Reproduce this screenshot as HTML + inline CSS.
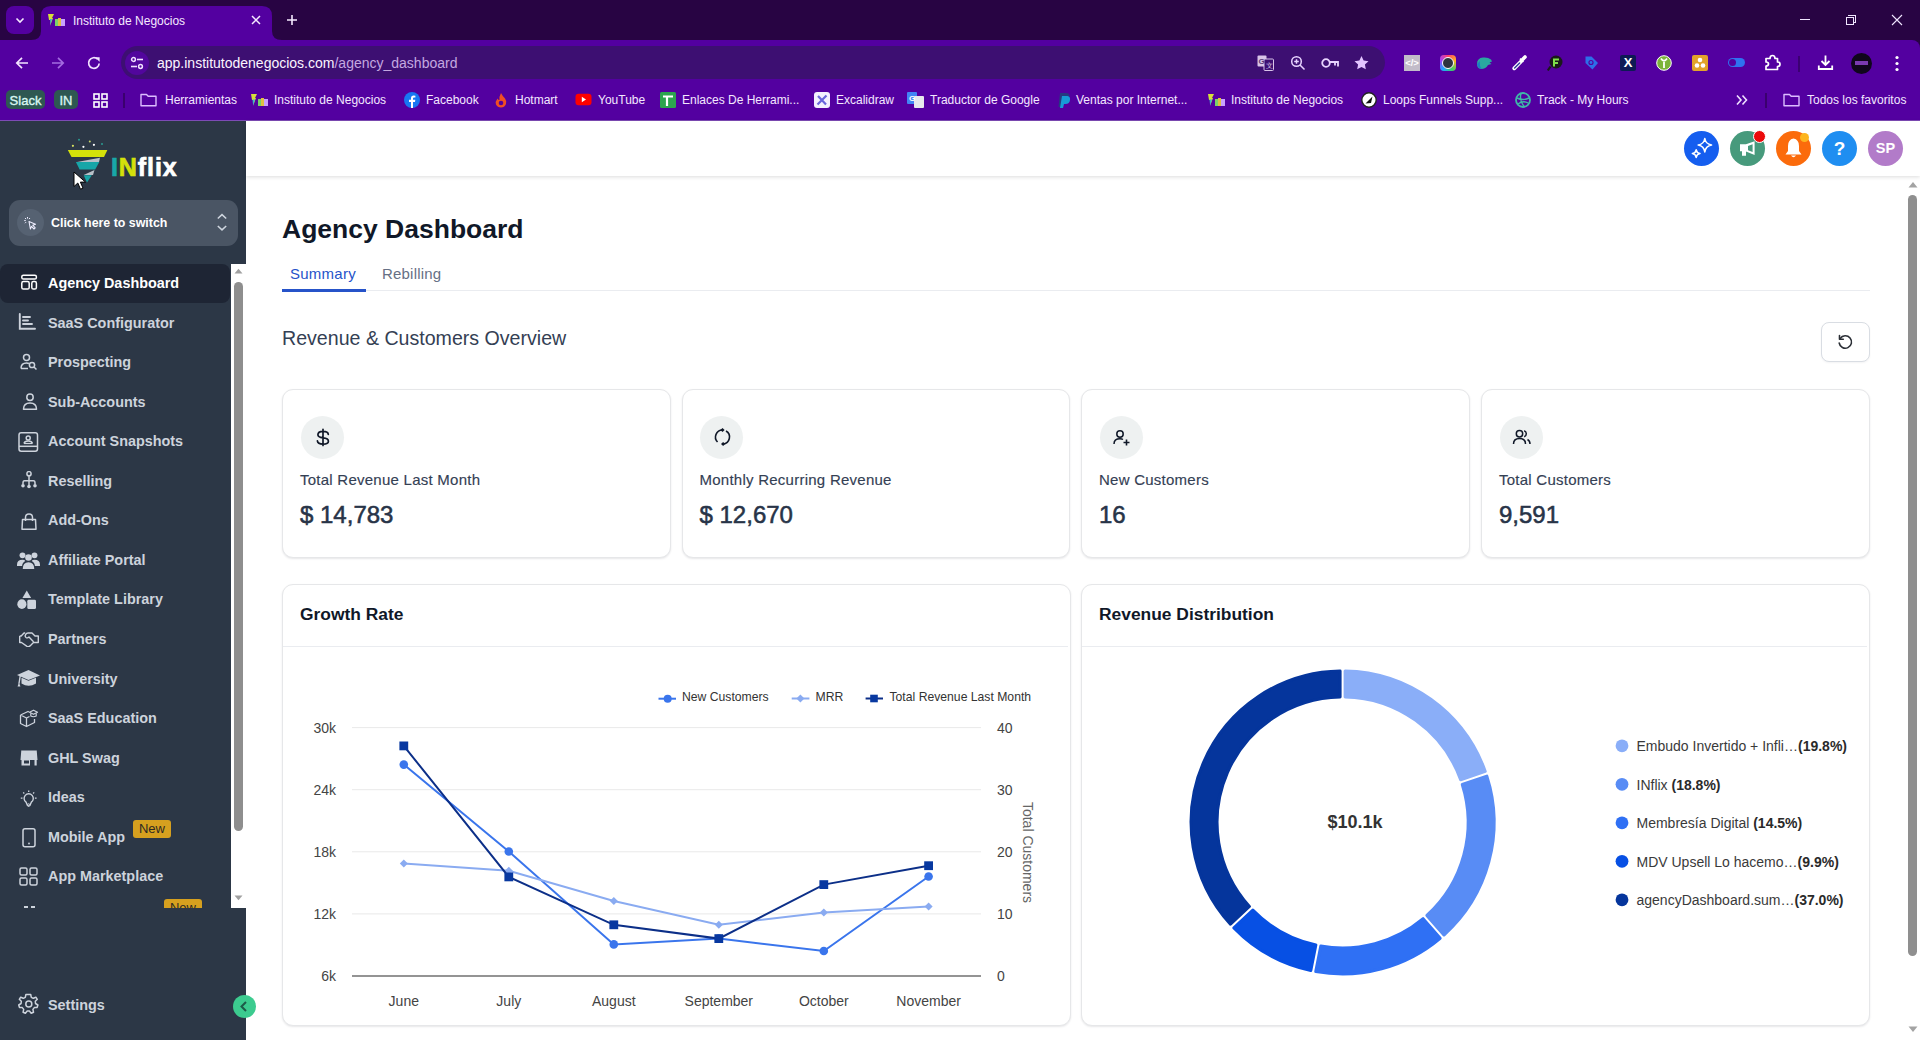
<!DOCTYPE html>
<html><head><meta charset="utf-8">
<style>
*{box-sizing:border-box;margin:0;padding:0}
html,body{width:1920px;height:1040px;overflow:hidden;background:#fff;font-family:"Liberation Sans",sans-serif}
.a{position:absolute}
#tabstrip{left:0;top:0;width:1920px;height:50px;background:#280443}
#toolbar{left:0;top:40px;width:1920px;height:80px;background:#5300a0;border-top-right-radius:8px}
#pageline{left:0;top:120px;width:1920px;height:1px;background:#7d4bb5}
.bm{position:absolute;top:92px;height:16px;font-size:12px;line-height:16px;color:#f3e8ff;white-space:nowrap}
#sidebar{left:0;top:121px;width:246px;height:919px;background:#2c3746}
.nav{position:absolute;left:48px;font-size:14.4px;font-weight:bold;color:#cdd3dc;white-space:nowrap;line-height:18px}
.ni{position:absolute;left:20px}
.card{position:absolute;background:#fff;border:1px solid #e6e7e9;border-radius:11px;box-shadow:0 1px 2px rgba(16,24,40,.10)}
.txt{position:absolute;white-space:nowrap}
</style></head>
<body>
<!-- ===== Browser chrome ===== -->
<div id="tabstrip" class="a"></div>
<div id="toolbar" class="a"></div>
<div id="pageline" class="a"></div>
<!-- tab dropdown -->
<div class="a" style="left:6px;top:6px;width:28px;height:28px;border-radius:8px;background:#5300a0"></div>
<svg class="a" style="left:14px;top:14px" width="12" height="12" viewBox="0 0 12 12"><path d="M2.5 4.5 L6 8 L9.5 4.5" stroke="#f5eaff" stroke-width="1.6" fill="none"/></svg>
<!-- active tab -->
<svg class="a" style="left:31px;top:6px" width="251" height="34" viewBox="0 0 251 34"><path d="M0 34 Q10 34 10 25 L10 10 Q10 0 20 0 L231 0 Q241 0 241 10 L241 25 Q241 34 251 34 Z" fill="#5300a0"/></svg>
<!-- favicon -->
<svg class="a" style="left:48px;top:13px" width="18" height="14" viewBox="0 0 18 14"><path d="M0 1h6l-2 4 1 0-3 8 1-6h-2z" fill="#d6e03a"/><path d="M2 6l2 0-1.5 6z" fill="#3cb6c8"/><rect x="7" y="6" width="3" height="7" fill="#7ad06a"/><rect x="10" y="5" width="3" height="8" fill="#e0c040"/><rect x="13" y="6" width="4" height="7" fill="#c9a0ff"/></svg>
<div class="txt" style="left:73px;top:14px;font-size:12px;line-height:14px;color:#f5e9ff">Instituto de Negocios</div>
<svg class="a" style="left:250px;top:14px" width="12" height="12" viewBox="0 0 12 12"><path d="M2 2L10 10M10 2L2 10" stroke="#f5eaff" stroke-width="1.5"/></svg>
<svg class="a" style="left:286px;top:14px" width="12" height="12" viewBox="0 0 12 12"><path d="M6 1V11M1 6H11" stroke="#f5eaff" stroke-width="1.6"/></svg>
<!-- window controls -->
<div class="a" style="left:1800px;top:19px;width:10px;height:1px;background:#f0e6ff"></div>
<div class="a" style="left:1846px;top:17px;width:8px;height:8px;border:1px solid #f0e6ff"></div><div class="a" style="left:1848px;top:15px;width:8px;height:2px;border-top:1px solid #f0e6ff;border-right:1px solid #f0e6ff"></div><div class="a" style="left:1855px;top:15px;width:1px;height:8px;background:#f0e6ff"></div><div class="a" style="left:1854px;top:22px;width:2px;height:1px;background:#f0e6ff"></div>
<svg class="a" style="left:1891px;top:14px" width="12" height="12" viewBox="0 0 12 12"><path d="M1 1L11 11M11 1L1 11" stroke="#f0e6ff" stroke-width="1.1"/></svg>
<!-- nav buttons -->
<svg class="a" style="left:14px;top:55px" width="16" height="16" viewBox="0 0 16 16"><path d="M14 8H3M8 2.8L2.8 8 8 13.2" stroke="#f3e3ff" stroke-width="1.7" fill="none"/></svg>
<svg class="a" style="left:50px;top:55px" width="16" height="16" viewBox="0 0 16 16"><path d="M2 8H13M8 2.8L13.2 8 8 13.2" stroke="#a46ce0" stroke-width="1.7" fill="none"/></svg>
<svg class="a" style="left:86px;top:55px" width="16" height="16" viewBox="0 0 16 16"><path d="M13.2 8.5A5.3 5.3 0 1 1 11.6 4.2" stroke="#f3e3ff" stroke-width="1.7" fill="none"/><path d="M9 2.2H13.6V6.8Z" fill="#f3e3ff"/></svg>
<!-- address bar -->
<div class="a" style="left:121px;top:46px;width:1264px;height:33px;border-radius:17px;background:#3d0f72"></div>
<div class="a" style="left:125px;top:51px;width:24px;height:24px;border-radius:12px;background:#52069d"></div>
<svg class="a" style="left:129px;top:55px" width="16" height="16" viewBox="0 0 16 16"><circle cx="4.5" cy="4.5" r="1.9" stroke="#f0e0ff" stroke-width="1.5" fill="none"/><path d="M8 4.5H14" stroke="#f0e0ff" stroke-width="1.6"/><circle cx="11.5" cy="11.5" r="1.9" stroke="#f0e0ff" stroke-width="1.5" fill="none"/><path d="M2 11.5H8" stroke="#f0e0ff" stroke-width="1.6"/></svg>
<div class="txt" style="left:157px;top:55px;font-size:14px;line-height:16px;color:#fbf5ff">app.institutodenegocios.com<span style="color:#c4a8e0">/agency_dashboard</span></div>
<!-- omnibox right icons -->
<svg class="a" style="left:1257px;top:55px" width="17" height="16" viewBox="0 0 17 16"><rect x="0.5" y="0.5" width="9" height="11" rx="1" fill="#d8c4e8"/><rect x="7" y="4" width="9.5" height="11.5" rx="1" fill="#3d0f72" stroke="#d8c4e8" stroke-width="1"/><text x="1.5" y="9" font-size="8" font-family="Liberation Sans" font-weight="bold" fill="#5a3a7a">G</text><text x="9" y="13" font-size="7" font-family="Liberation Sans" fill="#d8c4e8">文</text></svg>
<svg class="a" style="left:1290px;top:55px" width="16" height="16" viewBox="0 0 16 16"><circle cx="6.5" cy="6.5" r="4.8" stroke="#e8d4ff" stroke-width="1.5" fill="none"/><path d="M10 10L14.5 14.5M6.5 4.2V8.8M4.2 6.5H8.8" stroke="#e8d4ff" stroke-width="1.5"/></svg>
<svg class="a" style="left:1321px;top:57px" width="18" height="12" viewBox="0 0 18 12"><circle cx="5" cy="6" r="3.8" stroke="#e8d4ff" stroke-width="1.8" fill="none"/><path d="M8.8 5H17V9.5M14 5V8.5" stroke="#e8d4ff" stroke-width="1.8" fill="none"/></svg>
<svg class="a" style="left:1353px;top:55px" width="17" height="16" viewBox="0 0 24 24"><path d="M12 1.5l3.2 6.8 7.3.9-5.4 5 1.4 7.3L12 18l-6.5 3.5 1.4-7.3-5.4-5 7.3-.9z" fill="#e2c4ff"/></svg>
<!-- extension icons -->
<div class="a" style="left:1404px;top:55px;width:16px;height:16px;background:#c2bcc9;color:#fff;font-size:9.5px;font-weight:bold;line-height:16px;text-align:center">&lt;/&gt;</div>
<div class="a" style="left:1440px;top:55px;width:16px;height:16px;border-radius:4px;background:conic-gradient(#ff3d6e,#ffb020,#40d060,#20a8ff,#a040ff,#ff3d6e)"></div>
<div class="a" style="left:1442px;top:57px;width:12px;height:12px;border-radius:6px;background:#2e3440;border:1.5px solid #fff"></div>
<svg class="a" style="left:1476px;top:55px" width="17" height="16" viewBox="0 0 17 16"><path d="M1 9 Q1 3 7 2.5 Q12 2 15 4.5 L16 6.5 13.5 7.5 15.5 9 12 10 Q10 14 5 14 Q1 13.5 1 9Z" fill="#2aa8a0"/><path d="M1 9 Q2 13.5 6 14 Q3 11 4 6Z" fill="#1c7ac8"/></svg>
<svg class="a" style="left:1511px;top:54px" width="17" height="17" viewBox="0 0 17 17"><path d="M3.2 14.3L10 7.5" stroke="#fff" stroke-width="3.8" stroke-linecap="round"/><path d="M3.6 13.9L8.6 8.9" stroke="#2a3a9a" stroke-width="1.4" stroke-linecap="round"/><path d="M11.6 5.4L14 3" stroke="#fff" stroke-width="3.6" stroke-linecap="round"/><path d="M9 4.6L12.4 8" stroke="#fff" stroke-width="1.7"/></svg>
<svg class="a" style="left:1547px;top:55px" width="16" height="17" viewBox="0 0 16 17"><circle cx="9" cy="7" r="6.5" fill="#1a1a1a"/><path d="M6 3.5H12V5.5H8V7H11V9H8V11.5H6Z" fill="#7ee04a"/><path d="M3.5 11.5L0.8 15.5" stroke="#1a1a1a" stroke-width="2.2"/></svg>
<svg class="a" style="left:1584px;top:55px" width="15" height="16" viewBox="0 0 15 16"><path d="M1.5 1.5H7.5L14 8 8.5 14.5 1.5 8Z" fill="#2d6fe8"/><circle cx="7" cy="7.5" r="2.6" fill="#5300a0"/><circle cx="7" cy="7.5" r="1.4" fill="#2d6fe8"/></svg>
<div class="a" style="left:1620px;top:55px;width:16px;height:16px;border-radius:2px;background:#0d1a55;color:#fff;font-size:13px;font-weight:bold;line-height:16px;text-align:center">X</div>
<svg class="a" style="left:1656px;top:55px" width="16" height="16" viewBox="0 0 16 16"><circle cx="8" cy="8" r="7.3" fill="#7bb33a" stroke="#fff" stroke-width="1"/><path d="M5 3.5Q8 8 11 3.5M8 7V13" stroke="#fff" stroke-width="1.8" fill="none"/></svg>
<div class="a" style="left:1692px;top:55px;width:16px;height:16px;border-radius:2px;background:#e2a32a"></div>
<svg class="a" style="left:1692px;top:55px" width="16" height="16" viewBox="0 0 16 16"><circle cx="8" cy="5" r="2.3" fill="#fff"/><circle cx="5" cy="10.5" r="2.3" fill="#fff"/><circle cx="11" cy="10.5" r="2.3" fill="#fff"/></svg>
<div class="a" style="left:1728px;top:58px;width:17px;height:9px;border-radius:5px;background:#2f72f0"></div>
<div class="a" style="left:1729px;top:59px;width:7px;height:7px;border-radius:4px;background:#5300a0"></div>
<svg class="a" style="left:1764px;top:54px" width="17" height="17" viewBox="0 0 17 17"><path d="M2 4.5H6Q6 1.5 8.5 1.5T11 4.5H13.5V8Q16 8 16 10.2T13.5 12.5V15.5H2V12Q4.5 12 4.5 10T2 8Z" stroke="#fff" stroke-width="1.7" fill="none" stroke-linejoin="round"/></svg>
<div class="a" style="left:1798px;top:56px;width:2px;height:16px;background:#3b0072"></div>
<svg class="a" style="left:1817px;top:54px" width="17" height="17" viewBox="0 0 17 17"><path d="M8.5 1.5V11M4.5 7L8.5 11 12.5 7M1.8 11.5V15H15.2V11.5" stroke="#fff" stroke-width="1.8" fill="none"/></svg>
<div class="a" style="left:1851px;top:53px;width:21px;height:21px;border-radius:11px;background:#10061c"></div>
<div class="a" style="left:1855px;top:61px;width:13px;height:4px;background:#7a3ab0"></div>
<svg class="a" style="left:1894px;top:55px" width="6" height="17" viewBox="0 0 6 17"><circle cx="3" cy="2.5" r="1.6" fill="#fff"/><circle cx="3" cy="8.5" r="1.6" fill="#fff"/><circle cx="3" cy="14.5" r="1.6" fill="#fff"/></svg>
<!-- bookmarks bar -->
<div class="a" style="left:6px;top:90px;width:39px;height:19px;border-radius:5px;background:#2e5852;color:#d9f7f2;font-size:13px;-webkit-text-stroke:0.35px #d9f7f2;line-height:21px;text-align:center">Slack</div>
<div class="a" style="left:54px;top:90px;width:24px;height:19px;border-radius:5px;background:#2e5852;color:#d9f7f2;font-size:13px;-webkit-text-stroke:0.35px #d9f7f2;line-height:21px;text-align:center">IN</div>
<svg class="a" style="left:93px;top:93px" width="15" height="15" viewBox="0 0 15 15"><rect x="1" y="1" width="5" height="5" stroke="#fff" stroke-width="1.6" fill="none"/><rect x="9" y="1" width="5" height="5" stroke="#fff" stroke-width="1.6" fill="none"/><rect x="1" y="9" width="5" height="5" stroke="#fff" stroke-width="1.6" fill="none"/><rect x="9" y="9" width="5" height="5" stroke="#fff" stroke-width="1.6" fill="none"/></svg>
<div class="a" style="left:123px;top:93px;width:2px;height:15px;background:#3a006e"></div>
<svg class="a" style="left:140px;top:93px" width="17" height="14" viewBox="0 0 17 14"><path d="M1 1.5H6.5L8.2 3.3H16V12.8H1Z" stroke="#dcbcff" stroke-width="1.4" fill="none" stroke-linejoin="round"/></svg>
<div class="bm" style="left:165px">Herramientas</div>
<svg class="a" style="left:251px;top:93px" width="18" height="14" viewBox="0 0 18 14"><path d="M0 1h6l-2 4h1l-3 8 1-6H1z" fill="#d6e03a"/><path d="M1.5 6.5h2.5l-1.8 6z" fill="#3cb6c8"/><rect x="7" y="6" width="3" height="7" fill="#7ad06a"/><rect x="10" y="5" width="3" height="8" fill="#e0c040"/><rect x="13" y="6" width="4" height="7" fill="#c9a0ff"/></svg>
<div class="bm" style="left:274px">Instituto de Negocios</div>
<svg class="a" style="left:404px;top:92px" width="16" height="16" viewBox="0 0 16 16"><circle cx="8" cy="8" r="8" fill="#1877f2"/><path d="M9 16V10H11L11.3 7.8H9V6.5Q9 5.6 10 5.6H11.4V3.7Q10.6 3.5 9.7 3.5 7 3.5 7 6.2V7.8H5V10H7V16Z" fill="#fff"/></svg>
<div class="bm" style="left:426px">Facebook</div>
<svg class="a" style="left:494px;top:92px" width="14" height="16" viewBox="0 0 14 16"><path d="M7 1Q8.5 4 11 6.5Q13 9 12 12Q10.5 15.5 7 15.5Q3.5 15.5 2 12.5Q1 9.5 3.5 6.5Q4 8 5.5 8Q5 4.5 7 1Z" fill="#f04e23"/><circle cx="7" cy="11" r="2.3" fill="#5300a0"/></svg>
<div class="bm" style="left:515px">Hotmart</div>
<svg class="a" style="left:575px;top:93px" width="17" height="13" viewBox="0 0 17 13"><rect x="0.5" y="0.8" width="16" height="11.5" rx="3" fill="#ff0000"/><path d="M6.8 3.8V9.2L11 6.5Z" fill="#fff"/></svg>
<div class="bm" style="left:598px">YouTube</div>
<svg class="a" style="left:660px;top:92px" width="16" height="16" viewBox="0 0 16 16"><rect x="0" y="0" width="16" height="16" rx="1.5" fill="#2da44e"/><path d="M3 4.5H13M7 4.5V14" stroke="#fff" stroke-width="2.2"/></svg>
<div class="bm" style="left:682px">Enlaces De Herrami...</div>
<svg class="a" style="left:814px;top:92px" width="16" height="16" viewBox="0 0 16 16"><rect x="0" y="0" width="16" height="16" rx="3" fill="#f3f0ff"/><path d="M3.5 12.5L12.5 3.5M4 4l8 8.5" stroke="#6965db" stroke-width="2.2"/></svg>
<div class="bm" style="left:836px">Excalidraw</div>
<svg class="a" style="left:907px;top:92px" width="17" height="16" viewBox="0 0 17 16"><rect x="0" y="0" width="10" height="12" rx="1" fill="#4285f4"/><rect x="7" y="4" width="10" height="12" rx="1" fill="#e8eaed"/><text x="2" y="9" font-size="8" font-weight="bold" font-family="Liberation Sans" fill="#fff">G</text></svg>
<div class="bm" style="left:930px">Traductor de Google</div>
<svg class="a" style="left:1057px;top:92px" width="14" height="16" viewBox="0 0 14 16"><path d="M3 1H9Q13 1 12.5 5Q12 9.5 7.5 9.5H5.5L4.5 15H1.5Z" fill="#253b80"/><path d="M5 4H10.5Q13.5 4.5 13 8Q12.5 12 8.5 12H7L6 16H3Z" fill="#179bd7"/></svg>
<div class="bm" style="left:1076px">Ventas por Internet...</div>
<svg class="a" style="left:1208px;top:93px" width="18" height="14" viewBox="0 0 18 14"><path d="M0 1h6l-2 4h1l-3 8 1-6H1z" fill="#d6e03a"/><path d="M1.5 6.5h2.5l-1.8 6z" fill="#3cb6c8"/><rect x="7" y="6" width="3" height="7" fill="#7ad06a"/><rect x="10" y="5" width="3" height="8" fill="#e0c040"/><rect x="13" y="6" width="4" height="7" fill="#c9a0ff"/></svg>
<div class="bm" style="left:1231px">Instituto de Negocios</div>
<svg class="a" style="left:1361px;top:92px" width="16" height="16" viewBox="0 0 16 16"><circle cx="8" cy="8" r="7.2" fill="#fff" stroke="#222" stroke-width="1.4"/><path d="M4.5 11.5L11.5 4.5 10 11Z" fill="#111"/></svg>
<div class="bm" style="left:1383px">Loops Funnels Supp...</div>
<svg class="a" style="left:1515px;top:92px" width="16" height="16" viewBox="0 0 16 16"><circle cx="8" cy="8" r="7" fill="none" stroke="#3fb8a8" stroke-width="1.8"/><path d="M2 6Q8 9 14 6M3 12Q8 8 13 11M6 1.5Q4 8 9 14.5" stroke="#3fb8a8" stroke-width="1.4" fill="none"/></svg>
<div class="bm" style="left:1537px">Track - My Hours</div>
<svg class="a" style="left:1783px;top:93px" width="17" height="14" viewBox="0 0 17 14"><path d="M1 1.5H6.5L8.2 3.3H16V12.8H1Z" stroke="#dcbcff" stroke-width="1.4" fill="none" stroke-linejoin="round"/></svg>
<div class="bm" style="left:1807px">Todos los favoritos</div>
<svg class="a" style="left:1735px;top:94px" width="14" height="12" viewBox="0 0 14 12"><path d="M2 1.5L6 6 2 10.5M7.5 1.5L11.5 6 7.5 10.5" stroke="#f0e0ff" stroke-width="1.6" fill="none"/></svg>
<div class="a" style="left:1765px;top:93px;width:2px;height:15px;background:#3a006e"></div>
<div id="sidebar" class="a"></div>
<svg class="a" style="left:62px;top:135px" width="50" height="52" viewBox="0 0 50 52"><circle cx="17" cy="4.7" r="1" fill="#2a9a90"/><circle cx="27.8" cy="6.4" r="1" fill="#c8d670"/><circle cx="10.9" cy="10.8" r="1.1" fill="#d6e060"/><circle cx="21.4" cy="11.8" r="1.1" fill="#fff"/><circle cx="31.9" cy="9.8" r="1.1" fill="#fff"/><circle cx="40" cy="9" r="1" fill="#2a9a90"/><path d="M5.8 14.9H45.4L42 22H9.5Z" fill="#d4e10a"/><path d="M38 22.7L15 27H37Z" fill="#b8c0c8"/><path d="M13.9 27H37.3L33.2 34.5H17.6Z" fill="#17a6a8"/><path d="M32.5 35L21.7 40H31Z" fill="#b8c0c8"/><path d="M21.7 40.3H29.8L25 47.4Z" fill="#17a6a8"/></svg>
<div class="txt" style="left:111px;top:152px;font-size:25px;font-weight:bold;line-height:30px;letter-spacing:0.9px;-webkit-text-stroke:0.7px currentColor"><span style="color:#18a7a9">I</span><span style="color:#d4e10a">N</span><span style="color:#fff">flix</span></div>
<svg class="a" style="left:73px;top:171px" width="14" height="20" viewBox="0 0 14 20"><path d="M1 1V15.5L4.8 12 7.5 18.2 10 17.1 7.4 11.1H12.5Z" fill="#fff" stroke="#000" stroke-width="1"/></svg>
<div class="a" style="left:9px;top:200px;width:229px;height:46px;border-radius:11px;background:#4a5564"></div>
<div class="a" style="left:17px;top:209px;width:27px;height:27px;border-radius:14px;background:#566272"></div>
<svg class="a" style="left:23px;top:216px" width="14" height="14" viewBox="0 0 14 14"><path d="M6 5.5L12.5 8.2 9.7 9.2 12.2 11.8 11 13 8.5 10.4 7.4 13Z" fill="none" stroke="#eef" stroke-width="1.1" stroke-linejoin="round"/><path d="M4.5 1V2.6M1.2 4.6H2.8M2 2L3.1 3.1M7 2L6 3.1M2 7.2L3.1 6.1" stroke="#eef" stroke-width="1"/></svg>
<div class="txt" style="left:51px;top:216px;font-size:12.4px;font-weight:bold;line-height:15px;color:#fff">Click here to switch</div>
<svg class="a" style="left:216px;top:213px" width="12" height="19" viewBox="0 0 12 19"><path d="M1.8 5.5L6 1.6 10.2 5.5M1.8 13L6 16.9 10.2 13" stroke="#cfd6df" stroke-width="1.5" fill="none"/></svg>
<div class="a" style="left:0;top:264px;width:230px;height:39px;border-radius:8px;background:#1e2534"></div>
<div class="nav" style="top:273.9px;color:#fff">Agency Dashboard</div>
<svg class="a" style="left:20px;top:274px" width="19" height="17" viewBox="0 0 19 17" preserveAspectRatio="none"><rect x="1.8" y="1.2" width="14.6" height="3.8" rx="1.6" stroke="#fff" stroke-width="1.5" fill="none"/><rect x="1.8" y="7.6" width="7.4" height="7.4" rx="1.6" stroke="#fff" stroke-width="1.5" fill="none"/><rect x="11.8" y="7.6" width="4.6" height="7.4" rx="1.6" stroke="#fff" stroke-width="1.5" fill="none"/></svg>
<div class="nav" style="top:313.5px;color:#cdd3dc">SaaS Configurator</div>
<svg class="a" style="left:18px;top:313px" width="19" height="18" viewBox="0 0 19 18" preserveAspectRatio="none"><path d="M1.8 1V15.8H17" stroke="#cdd3dc" stroke-width="1.9" fill="none" stroke-linecap="round"/><path d="M5 4H12M5 7.5H10M5 11H14" stroke="#cdd3dc" stroke-width="1.9" stroke-linecap="round"/></svg>
<div class="nav" style="top:353.0px;color:#cdd3dc">Prospecting</div>
<svg class="a" style="left:20px;top:353px" width="19" height="18" viewBox="0 0 19 18" preserveAspectRatio="none"><circle cx="6.5" cy="4.5" r="3" stroke="#cdd3dc" stroke-width="1.5" fill="none"/><path d="M1 15.5Q1 10 6.5 10Q8 10 9 10.5" stroke="#cdd3dc" stroke-width="1.5" fill="none"/><path d="M1 15.5H8" stroke="#cdd3dc" stroke-width="1.5" fill="none"/><circle cx="12" cy="12" r="2.6" stroke="#cdd3dc" stroke-width="1.5" fill="none"/><path d="M14 14L16.5 16.5" stroke="#cdd3dc" stroke-width="1.5"/></svg>
<div class="nav" style="top:392.6px;color:#cdd3dc">Sub-Accounts</div>
<svg class="a" style="left:21px;top:393px" width="18" height="18" viewBox="0 0 18 18" preserveAspectRatio="none"><circle cx="9" cy="4.3" r="3.2" stroke="#cdd3dc" stroke-width="1.5" fill="none"/><path d="M2.5 16.3Q2.5 10 9 10T15.5 16.3Z" stroke="#cdd3dc" stroke-width="1.5" fill="none" stroke-linejoin="round"/></svg>
<div class="nav" style="top:432.1px;color:#cdd3dc">Account Snapshots</div>
<svg class="a" style="left:18px;top:432px" width="21" height="21" viewBox="0 0 21 21" preserveAspectRatio="none"><rect x="1" y="0.8" width="18.5" height="18.5" rx="2.2" stroke="#cdd3dc" stroke-width="1.5" fill="none"/><path d="M1 14.3H19.5" stroke="#cdd3dc" stroke-width="1.5"/><circle cx="10.2" cy="6" r="2" stroke="#cdd3dc" stroke-width="1.5" fill="none"/><path d="M6 11.5Q6.5 9 10.2 9T14.4 11.5" stroke="#cdd3dc" stroke-width="1.5" fill="none"/><path d="M6 11.5H14.4" stroke="#cdd3dc" stroke-width="1.2"/></svg>
<div class="nav" style="top:471.7px;color:#cdd3dc">Reselling</div>
<svg class="a" style="left:20px;top:471px" width="18" height="18" viewBox="0 0 18 18" preserveAspectRatio="none"><circle cx="9" cy="2.7" r="2.1" stroke="#cdd3dc" stroke-width="1.5" fill="none"/><path d="M9 4.8V15.5M9 9.8H4.5Q3 9.8 3 12V13.5M9 9.8H13.5Q15 9.8 15 12V13.5" stroke="#cdd3dc" stroke-width="1.5" fill="none"/><circle cx="3" cy="14.8" r="1.8" fill="#cdd3dc"/><circle cx="9" cy="15.5" r="1.8" fill="#cdd3dc"/><circle cx="15" cy="14.8" r="1.8" fill="#cdd3dc"/></svg>
<div class="nav" style="top:511.3px;color:#cdd3dc">Add-Ons</div>
<svg class="a" style="left:20px;top:513px" width="18" height="18" viewBox="0 0 18 18" preserveAspectRatio="none"><path d="M2.5 6.5H15.5L16 16.3H2Z" stroke="#cdd3dc" stroke-width="1.5" fill="none" stroke-linejoin="round"/><path d="M5.5 8V4.5Q5.5 1 9 1T12.5 4.5V8" stroke="#cdd3dc" stroke-width="1.5" fill="none"/></svg>
<div class="nav" style="top:550.8px;color:#cdd3dc">Affiliate Portal</div>
<svg class="a" style="left:17px;top:551px" width="23" height="18" viewBox="0 0 18 14.5" preserveAspectRatio="none"><circle cx="4.3" cy="3.5" r="2.3" fill="#cdd3dc"/><circle cx="13.7" cy="3.5" r="2.3" fill="#cdd3dc"/><circle cx="9" cy="5.3" r="2.6" fill="#cdd3dc"/><path d="M0 11Q0 7 4.3 7Q6 7 6.5 8Q4 9.5 4 12H0Z" fill="#cdd3dc"/><path d="M18 11Q18 7 13.7 7Q12 7 11.5 8Q14 9.5 14 12H18Z" fill="#cdd3dc"/><path d="M4.5 14.5Q4.5 9 9 9T13.5 14.5Z" fill="#cdd3dc"/></svg>
<div class="nav" style="top:590.4px;color:#cdd3dc">Template Library</div>
<svg class="a" style="left:17px;top:590px" width="19" height="19" viewBox="0 0 17.5 16.5" preserveAspectRatio="none"><path d="M9 0.5L13 7H5Z" fill="#cdd3dc"/><circle cx="4.5" cy="12.3" r="4.2" fill="#cdd3dc"/><rect x="9.5" y="8.5" width="8" height="8" rx="1.3" fill="#cdd3dc"/></svg>
<div class="nav" style="top:629.9px;color:#cdd3dc">Partners</div>
<svg class="a" style="left:19px;top:632px" width="20" height="15" viewBox="0 0 20 15" preserveAspectRatio="none"><path d="M0.7 4V10.5H2.5L8 14.3Q9.5 15.2 11 13.9L14.5 10.5H19.3V4H16L13 1H9Q7.5 1 6.6 2.6Q5.6 4.5 7 5.5Q8.5 6.5 10 5L14.5 9.8M6.2 1H5L2.2 4H0.7" stroke="#cdd3dc" stroke-width="1.4" fill="none" stroke-linejoin="round"/></svg>
<div class="nav" style="top:669.5px;color:#cdd3dc">University</div>
<svg class="a" style="left:17px;top:669px" width="23" height="18" viewBox="0 0 23 18" preserveAspectRatio="none"><path d="M0 6L11.5 1L23 6.5L11.5 11Z" fill="#cdd3dc"/><path d="M4.5 8.8V14.5Q11.5 19 19 14.5V8.8L11.5 11.8Z" fill="#cdd3dc"/><path d="M3.2 7L2 14.5" stroke="#cdd3dc" stroke-width="1.4"/><path d="M0.6 17.5L2 13.2 3.4 17.5Z" fill="#cdd3dc"/></svg>
<div class="nav" style="top:709.1px;color:#cdd3dc">SaaS Education</div>
<svg class="a" style="left:19px;top:709px" width="20" height="19" viewBox="0 0 20 19" preserveAspectRatio="none"><path d="M1.5 6L9 2.5 10 3M1.5 6V14.5L7.5 17.5 15.5 13.5V10M1.5 6L7.5 9V17.5M7.5 9L10.5 7.5" stroke="#cdd3dc" stroke-width="1.3" fill="none" stroke-linejoin="round"/><path d="M10.5 3.3L14.5 1.2 18.5 3.3 14.5 5.3Z" stroke="#cdd3dc" stroke-width="1.2" fill="none" stroke-linejoin="round"/><path d="M11.8 4.3V7Q14.5 8.5 17.2 7V4.3" stroke="#cdd3dc" stroke-width="1.2" fill="none"/></svg>
<div class="nav" style="top:748.6px;color:#cdd3dc">GHL Swag</div>
<svg class="a" style="left:20px;top:749px" width="18" height="17" viewBox="0 0 18 17" preserveAspectRatio="none"><path d="M1.2 1.5H16.8V2.6L17.5 11H0.5L1.2 2.6Z" fill="#cdd3dc"/><path d="M1.5 11H10V16.5H1.5ZM4 11.5V14.5H9V11.5Z" fill="#cdd3dc" fill-rule="evenodd"/><rect x="14.5" y="11" width="2.2" height="5.5" fill="#cdd3dc"/></svg>
<div class="nav" style="top:788.2px;color:#cdd3dc">Ideas</div>
<svg class="a" style="left:18px;top:787px" width="22" height="22" viewBox="0 0 22 22" preserveAspectRatio="none"><path d="M8.1 15.2A4.6 4.6 0 1 1 13.3 15.2L11.8 18.6Q10.7 19.8 9.6 18.6Z" stroke="#cdd3dc" stroke-width="1.4" fill="none" stroke-linejoin="round"/><circle cx="10.7" cy="17.6" r="0.9" stroke="#cdd3dc" stroke-width="0.9" fill="none"/><path d="M10.7 3.4V5M5.2 5.4L6.3 6.5M16.2 5.4L15.1 6.5M2.8 11.2H4.5M16.9 11.2H18.6" stroke="#cdd3dc" stroke-width="1.3"/></svg>
<div class="nav" style="top:827.7px;color:#cdd3dc">Mobile App</div>
<svg class="a" style="left:20px;top:828px" width="18" height="20" viewBox="0 0 18 20" preserveAspectRatio="none"><rect x="3" y="0.8" width="12" height="18" rx="2" stroke="#cdd3dc" stroke-width="1.5" fill="none"/><circle cx="9" cy="15.5" r="0.9" fill="#cdd3dc"/></svg>
<div class="nav" style="top:867.3px;color:#cdd3dc">App Marketplace</div>
<svg class="a" style="left:19px;top:867px" width="19" height="19" viewBox="0 0 19 19" preserveAspectRatio="none"><rect x="1" y="1" width="7" height="7" rx="1.5" stroke="#cdd3dc" stroke-width="1.5" fill="none"/><rect x="11" y="1" width="7" height="7" rx="1.5" stroke="#cdd3dc" stroke-width="1.5" fill="none"/><rect x="1" y="11" width="7" height="7" rx="1.5" stroke="#cdd3dc" stroke-width="1.5" fill="none"/><rect x="11" y="11" width="7" height="7" rx="1.5" stroke="#cdd3dc" stroke-width="1.5" fill="none"/></svg>
<div class="a" style="left:133px;top:820px;width:38px;height:18px;border-radius:3px;background:#d6a01f;color:#2d2a22;font-size:13px;line-height:18px;text-align:center">New</div>
<div style="position:absolute;left:0;top:895px;width:231px;height:13px;overflow:hidden"><div class="a" style="left:164px;top:4px;width:38px;height:18px;border-radius:3px;background:#d6a01f;color:#2d2a22;font-size:13px;line-height:18px;text-align:center">New</div><div class="a" style="left:24px;top:11px;width:4px;height:1.5px;background:#cdd3dc"></div><div class="a" style="left:31px;top:11px;width:4px;height:1.5px;background:#cdd3dc"></div></div>
<div class="a" style="left:231px;top:264px;width:15px;height:644px;background:#fff"></div>
<div class="a" style="left:234px;top:282px;width:9px;height:549px;border-radius:5px;background:#8e8e8e"></div>
<svg class="a" style="left:234px;top:268px" width="9" height="6" viewBox="0 0 9 6"><path d="M0.5 5.5L4.5 0.8 8.5 5.5Z" fill="#a0a0a0"/></svg>
<svg class="a" style="left:234px;top:895px" width="9" height="6" viewBox="0 0 9 6"><path d="M0.5 0.5L4.5 5.2 8.5 0.5Z" fill="#a0a0a0"/></svg>
<div class="nav" style="top:995.5px">Settings</div>
<svg class="a" style="left:18px;top:993px" width="22" height="22" viewBox="0 0 22 22"><path d="M11 1.5L13 1.5 13.6 4.3 15.6 5.3 18.2 4.2 19.6 6.3 17.6 8.3 17.8 10.5 20.2 12 19.4 14.4 16.6 14.6 15.2 16.4 15.8 19.2 13.5 20.2 11.7 18 9.5 18 7.7 20.2 5.4 19.2 6 16.4 4.6 14.6 1.8 14.4 1 12 3.4 10.5 3.6 8.3 1.6 6.3 3 4.2 5.6 5.3 7.6 4.3 8.2 1.5Z" stroke="#cdd3dc" stroke-width="1.5" fill="none" stroke-linejoin="round" transform="translate(-0.3,0)"/><circle cx="10.8" cy="11" r="3" stroke="#cdd3dc" stroke-width="1.5" fill="none"/></svg>
<div class="a" style="left:233px;top:995px;width:23px;height:23px;border-radius:12px;background:#3ccb8f"></div>
<svg class="a" style="left:238px;top:1000px" width="12" height="13" viewBox="0 0 12 13"><path d="M8 2L3.5 6.5 8 11" stroke="#1d5a48" stroke-width="2" fill="none"/></svg>
<div class="a" style="left:246px;top:121px;width:1674px;height:55px;background:#fff;box-shadow:0 1px 4px rgba(0,0,0,.14)"></div>
<div class="a" style="left:1684px;top:131px;width:35px;height:35px;border-radius:50%;background:#155eef"></div>
<svg class="a" style="left:1684px;top:131px" width="35" height="35" viewBox="0 0 35 35"><path d="M20.8 7.5Q21.6 13 27.5 14Q21.6 15 20.8 21Q20 15 14.2 14Q20 13 20.8 7.5Z" stroke="#fff" stroke-width="1.6" fill="none" stroke-linejoin="round"/><path d="M12.2 18.8Q12.7 22 16 22.5Q12.7 23 12.2 26.5Q11.7 23 8.4 22.5Q11.7 22 12.2 18.8Z" stroke="#fff" stroke-width="1.6" fill="none" stroke-linejoin="round"/></svg>
<div class="a" style="left:1730px;top:131px;width:35px;height:35px;border-radius:50%;background:#479a7c"></div>
<svg class="a" style="left:1730px;top:131px" width="35" height="35" viewBox="0 0 35 35"><path d="M10 13.2H16.5V20.2H16V24.7H12V20.2H10Z" fill="#fff"/><path d="M16 13.3L24.6 10.2V24L16 20.4ZM18 15L22.6 13.2V21L18 19.2Z" fill="#fff" fill-rule="evenodd"/></svg>
<div class="a" style="left:1753px;top:130px;width:13px;height:13px;border-radius:50%;background:#ec0a0a;border:1px solid #fff"></div>
<div class="a" style="left:1776px;top:131px;width:35px;height:35px;border-radius:50%;background:#fb6b0c"></div>
<svg class="a" style="left:1776px;top:131px" width="35" height="35" viewBox="0 0 35 35"><path d="M17.5 7.5Q12 8.5 12 15V20L9.5 23.5H25.5L23 20V15Q23 8.5 17.5 7.5Z" fill="#fff"/><path d="M15 24.5Q17.5 28 20 24.5Z" fill="#fff"/></svg>
<div class="a" style="left:1800px;top:133px;width:9px;height:9px;border-radius:50%;background:#fdb51f"></div>
<div class="a" style="left:1822px;top:131px;width:35px;height:35px;border-radius:50%;background:#1f8ef1"></div>
<div class="txt" style="left:1822px;top:138px;width:35px;text-align:center;font-size:19px;font-weight:bold;line-height:21px;color:#fff">?</div>
<div class="a" style="left:1868px;top:131px;width:35px;height:35px;border-radius:50%;background:#b27bc9"></div>
<div class="txt" style="left:1868px;top:140px;width:35px;text-align:center;font-size:14.5px;font-weight:bold;line-height:17px;color:#fff">SP</div>
<svg class="a" style="left:1908px;top:181px" width="10" height="7" viewBox="0 0 10 7"><path d="M0.5 6.5L5 1 9.5 6.5Z" fill="#a3a3a3"/></svg>
<div class="a" style="left:1908px;top:195px;width:9px;height:761px;border-radius:5px;background:#8f8f8f"></div>
<svg class="a" style="left:1908px;top:1026px" width="10" height="7" viewBox="0 0 10 7"><path d="M0.5 0.5L5 6 9.5 0.5Z" fill="#a3a3a3"/></svg>
<div class="txt" style="left:282px;top:214px;font-size:26.5px;font-weight:bold;line-height:30px;color:#101828">Agency Dashboard</div>
<div class="a" style="left:282px;top:290px;width:1588px;height:1px;background:#eaecf0"></div>
<div class="a" style="left:282px;top:289px;width:84px;height:2.5px;background:#2653c9"></div>
<div class="txt" style="left:290px;top:265px;font-size:15px;letter-spacing:0.25px;line-height:17px;color:#2653c9">Summary</div>
<div class="txt" style="left:382px;top:265px;font-size:15px;letter-spacing:0.2px;line-height:17px;color:#667085">Rebilling</div>
<div class="txt" style="left:282px;top:327px;font-size:19.6px;line-height:22px;color:#344054">Revenue &amp; Customers Overview</div>
<div class="a" style="left:1821px;top:322px;width:49px;height:40px;border-radius:8px;border:1px solid #d9dde3;background:#fff;box-shadow:0 1px 2px rgba(16,24,40,.05)"></div>
<svg class="a" style="left:1836px;top:333px" width="18" height="18" viewBox="0 0 18 18"><path d="M4.2 5.5A6.2 6.2 0 1 1 3.2 10" stroke="#2b2f36" stroke-width="1.6" fill="none" stroke-linecap="round"/><path d="M3.5 2.5V6.3H7.3" stroke="#2b2f36" stroke-width="1.6" fill="none" stroke-linecap="round" stroke-linejoin="round"/></svg>
<div class="card" style="left:282px;top:388.6px;width:388.5px;height:169px"></div>
<div class="a" style="left:300.5px;top:416px;width:43px;height:43px;border-radius:50%;background:#eef1f1"></div>
<svg class="a" style="left:311.5px;top:427px" width="22" height="22" viewBox="0 0 22 22"><path d="M16.3 7.3Q16 4.4 11 4.4Q5.9 4.4 5.9 7.8Q5.9 10.3 11 10.8Q16.4 11.3 16.4 14.2Q16.4 17.1 11 17.1Q5.7 17.1 5.4 13.9M11 2.3V18.4" stroke="#101828" stroke-width="1.7" fill="none" stroke-linecap="round"/></svg>
<div class="txt" style="left:300px;top:471px;font-size:15px;letter-spacing:0.25px;-webkit-text-stroke:0.15px #344054;line-height:17px;color:#344054">Total Revenue Last Month</div>
<div class="txt" style="left:300px;top:501px;font-size:24px;font-weight:normal;-webkit-text-stroke:0.55px #283448;line-height:28px;color:#283448">$ 14,783</div>
<div class="card" style="left:681.5px;top:388.6px;width:388.5px;height:169px"></div>
<div class="a" style="left:700.0px;top:416px;width:43px;height:43px;border-radius:50%;background:#eef1f1"></div>
<svg class="a" style="left:711.0px;top:427px" width="22" height="22" viewBox="0 0 22 22"><path d="M11.5 3A7 7 0 0 0 6.55 14.95M15 3.94A7 7 0 0 1 12.1 16.97" stroke="#101828" stroke-width="1.6" fill="none"/><path d="M11.5 0.9L13.6 3 11.5 5.1 9.4 3Z" fill="#101828"/><path d="M12.1 14.9L14.2 17 12.1 19.1 10 17Z" fill="#101828"/></svg>
<div class="txt" style="left:699.5px;top:471px;font-size:15px;letter-spacing:0.25px;-webkit-text-stroke:0.15px #344054;line-height:17px;color:#344054">Monthly Recurring Revenue</div>
<div class="txt" style="left:699.5px;top:501px;font-size:24px;font-weight:normal;-webkit-text-stroke:0.55px #283448;line-height:28px;color:#283448">$ 12,670</div>
<div class="card" style="left:1081px;top:388.6px;width:388.5px;height:169px"></div>
<div class="a" style="left:1099.5px;top:416px;width:43px;height:43px;border-radius:50%;background:#eef1f1"></div>
<svg class="a" style="left:1110.5px;top:427px" width="22" height="22" viewBox="0 0 22 22"><circle cx="9" cy="7" r="3.2" stroke="#101828" stroke-width="1.5" fill="none"/><path d="M3 17Q3 11.8 9 11.8Q11 11.8 12 12.5" stroke="#101828" stroke-width="1.5" fill="none"/><path d="M15.5 12.5V18.5M12.5 15.5H18.5" stroke="#101828" stroke-width="1.6"/></svg>
<div class="txt" style="left:1099px;top:471px;font-size:15px;letter-spacing:0.25px;-webkit-text-stroke:0.15px #344054;line-height:17px;color:#344054">New Customers</div>
<div class="txt" style="left:1099px;top:501px;font-size:24px;font-weight:normal;-webkit-text-stroke:0.55px #283448;line-height:28px;color:#283448">16</div>
<div class="card" style="left:1481px;top:388.6px;width:388.5px;height:169px"></div>
<div class="a" style="left:1499.5px;top:416px;width:43px;height:43px;border-radius:50%;background:#eef1f1"></div>
<svg class="a" style="left:1510.5px;top:427px" width="22" height="22" viewBox="0 0 22 22"><circle cx="8.5" cy="6.8" r="3.2" stroke="#101828" stroke-width="1.5" fill="none"/><path d="M2.5 17Q2.5 11.5 8.5 11.5T14.5 17" stroke="#101828" stroke-width="1.5" fill="none"/><path d="M13.2 3.8A3.2 3.2 0 0 1 13.2 9.8M16.5 12.5Q19 13.8 19 17" stroke="#101828" stroke-width="1.5" fill="none"/></svg>
<div class="txt" style="left:1499px;top:471px;font-size:15px;letter-spacing:0.25px;-webkit-text-stroke:0.15px #344054;line-height:17px;color:#344054">Total Customers</div>
<div class="txt" style="left:1499px;top:501px;font-size:24px;font-weight:normal;-webkit-text-stroke:0.55px #283448;line-height:28px;color:#283448">9,591</div>
<div class="card" style="left:282px;top:584.2px;width:788.5px;height:441.5px"></div>
<div class="a" style="left:283px;top:646px;width:785px;height:1px;background:#eaecf0"></div>
<div class="txt" style="left:300px;top:604px;font-size:17.4px;font-weight:bold;line-height:20px;color:#101828">Growth Rate</div>
<div class="card" style="left:1081px;top:584.2px;width:788.5px;height:441.5px"></div>
<div class="a" style="left:1082px;top:646px;width:785px;height:1px;background:#eaecf0"></div>
<div class="txt" style="left:1099px;top:604px;font-size:17.4px;font-weight:bold;line-height:20px;color:#101828">Revenue Distribution</div>
<svg class="a" style="left:0;top:0" width="1920" height="1040" viewBox="0 0 1920 1040" font-family="Liberation Sans"><line x1="352" y1="727.6" x2="981" y2="727.6" stroke="#e9e9e9" stroke-width="1"/><line x1="352" y1="789.7" x2="981" y2="789.7" stroke="#e9e9e9" stroke-width="1"/><line x1="352" y1="851.8" x2="981" y2="851.8" stroke="#e9e9e9" stroke-width="1"/><line x1="352" y1="913.9" x2="981" y2="913.9" stroke="#e9e9e9" stroke-width="1"/><line x1="352" y1="976" x2="981" y2="976" stroke="#2a2a2a" stroke-width="1.1"/><text x="336" y="732.6" text-anchor="end" font-size="14" fill="#444">30k</text><text x="997" y="732.6" text-anchor="start" font-size="14" fill="#444">40</text><text x="336" y="794.7" text-anchor="end" font-size="14" fill="#444">24k</text><text x="997" y="794.7" text-anchor="start" font-size="14" fill="#444">30</text><text x="336" y="856.8" text-anchor="end" font-size="14" fill="#444">18k</text><text x="997" y="856.8" text-anchor="start" font-size="14" fill="#444">20</text><text x="336" y="918.9" text-anchor="end" font-size="14" fill="#444">12k</text><text x="997" y="918.9" text-anchor="start" font-size="14" fill="#444">10</text><text x="336" y="981" text-anchor="end" font-size="14" fill="#444">6k</text><text x="997" y="981" text-anchor="start" font-size="14" fill="#444">0</text><text x="403.8" y="1006" text-anchor="middle" font-size="14" fill="#444">June</text><text x="508.8" y="1006" text-anchor="middle" font-size="14" fill="#444">July</text><text x="613.8" y="1006" text-anchor="middle" font-size="14" fill="#444">August</text><text x="718.8" y="1006" text-anchor="middle" font-size="14" fill="#444">September</text><text x="823.8" y="1006" text-anchor="middle" font-size="14" fill="#444">October</text><text x="928.6" y="1006" text-anchor="middle" font-size="14" fill="#444">November</text><text transform="translate(1023,852.5) rotate(90)" text-anchor="middle" font-size="14" fill="#666">Total Customers</text><polyline points="403.8,764.6 508.8,851.5 613.8,944.4 718.8,938.6 823.8,951.0 928.6,876.5" fill="none" stroke="#3a75ec" stroke-width="2"/><circle cx="403.8" cy="764.6" r="4.3" fill="#3a75ec"/><circle cx="508.8" cy="851.5" r="4.3" fill="#3a75ec"/><circle cx="613.8" cy="944.4" r="4.3" fill="#3a75ec"/><circle cx="718.8" cy="938.6" r="4.3" fill="#3a75ec"/><circle cx="823.8" cy="951.0" r="4.3" fill="#3a75ec"/><circle cx="928.6" cy="876.5" r="4.3" fill="#3a75ec"/><polyline points="403.8,863.5 508.8,870.8 613.8,901.0 718.8,924.8 823.8,912.4 928.6,906.5" fill="none" stroke="#8aabf1" stroke-width="2"/><path d="M403.8 859.5L407.8 863.5L403.8 867.5L399.8 863.5Z" fill="#8aabf1"/><path d="M508.8 866.8L512.8 870.8L508.8 874.8L504.8 870.8Z" fill="#8aabf1"/><path d="M613.8 897.0L617.8 901.0L613.8 905.0L609.8 901.0Z" fill="#8aabf1"/><path d="M718.8 920.8L722.8 924.8L718.8 928.8L714.8 924.8Z" fill="#8aabf1"/><path d="M823.8 908.4L827.8 912.4L823.8 916.4L819.8 912.4Z" fill="#8aabf1"/><path d="M928.6 902.5L932.6 906.5L928.6 910.5L924.6 906.5Z" fill="#8aabf1"/><polyline points="403.8,745.9 508.8,876.9 613.8,924.8 718.8,938.6 823.8,884.6 928.6,865.7" fill="none" stroke="#0c2f88" stroke-width="2"/><rect x="399.40000000000003" y="741.5" width="8.8" height="8.8" fill="#0838a0"/><rect x="504.40000000000003" y="872.5" width="8.8" height="8.8" fill="#0838a0"/><rect x="609.4" y="920.4" width="8.8" height="8.8" fill="#0838a0"/><rect x="714.4" y="934.2" width="8.8" height="8.8" fill="#0838a0"/><rect x="819.4" y="880.2" width="8.8" height="8.8" fill="#0838a0"/><rect x="924.2" y="861.3000000000001" width="8.8" height="8.8" fill="#0838a0"/><line x1="658.5" y1="698.7" x2="676" y2="698.7" stroke="#3a75ec" stroke-width="2"/><circle cx="667.7" cy="698.7" r="4" fill="#3a75ec"/><text x="682" y="701" font-size="12.2" fill="#333">New Customers</text><line x1="791.7" y1="698.5" x2="809.4" y2="698.5" stroke="#8aabf1" stroke-width="2"/><path d="M800.4 694.5L804.4 698.5 800.4 702.5 796.4 698.5Z" fill="#8aabf1"/><text x="815.5" y="701" font-size="12.2" fill="#333">MRR</text><line x1="865.6" y1="698.5" x2="883" y2="698.5" stroke="#0c2f88" stroke-width="2"/><rect x="870.2" y="694.7" width="7.6" height="7.6" fill="#0838a0"/><text x="889.5" y="701" font-size="12.2" fill="#333">Total Revenue Last Month</text><path d="M1345.10 670.92A151.5 151.5 0 0 1 1485.26 771.42L1460.63 779.76A125.5 125.5 0 0 0 1345.10 696.92Z" fill="#8aaef8" stroke="#8aaef8" stroke-width="3.0" stroke-linejoin="round"/><path d="M1486.87 776.15A151.5 151.5 0 0 1 1443.94 935.01L1426.87 915.40A125.5 125.5 0 0 0 1462.24 784.50Z" fill="#588cf5" stroke="#588cf5" stroke-width="3.0" stroke-linejoin="round"/><path d="M1440.17 938.29A151.5 151.5 0 0 1 1315.73 971.50L1320.77 945.99A125.5 125.5 0 0 0 1423.10 918.68Z" fill="#2f70f4" stroke="#2f70f4" stroke-width="3.0" stroke-linejoin="round"/><path d="M1310.83 970.53A151.5 151.5 0 0 1 1233.89 927.92L1252.84 910.12A125.5 125.5 0 0 0 1315.86 945.02Z" fill="#0750e4" stroke="#0750e4" stroke-width="3.0" stroke-linejoin="round"/><path d="M1230.46 924.27A151.5 151.5 0 0 1 1340.10 670.92L1340.10 696.92A125.5 125.5 0 0 0 1249.42 906.47Z" fill="#05359c" stroke="#05359c" stroke-width="3.0" stroke-linejoin="round"/><text x="1355" y="827.5" text-anchor="middle" font-size="18" font-weight="bold" fill="#333">$10.1k</text><circle cx="1622" cy="745.8" r="6.4" fill="#8aaef8"/><text x="1636.5" y="751.0999999999999" font-size="14" fill="#3a3a3a" xml:space="preserve">Embudo Invertido + Infli…<tspan font-weight="bold" fill="#2a2a2a">(19.8%)</tspan></text><circle cx="1622" cy="784.3" r="6.4" fill="#588cf5"/><text x="1636.5" y="789.5999999999999" font-size="14" fill="#3a3a3a" xml:space="preserve">INflix <tspan font-weight="bold" fill="#2a2a2a">(18.8%)</tspan></text><circle cx="1622" cy="822.8" r="6.4" fill="#2f70f4"/><text x="1636.5" y="828.0999999999999" font-size="14" fill="#3a3a3a" xml:space="preserve">Membresía Digital <tspan font-weight="bold" fill="#2a2a2a">(14.5%)</tspan></text><circle cx="1622" cy="861.3" r="6.4" fill="#0750e4"/><text x="1636.5" y="866.5999999999999" font-size="14" fill="#3a3a3a" xml:space="preserve">MDV Upsell Lo hacemo…<tspan font-weight="bold" fill="#2a2a2a">(9.9%)</tspan></text><circle cx="1622" cy="899.8" r="6.4" fill="#05359c"/><text x="1636.5" y="905.0999999999999" font-size="14" fill="#3a3a3a" xml:space="preserve">agencyDashboard.sum…<tspan font-weight="bold" fill="#2a2a2a">(37.0%)</tspan></text></svg>
</body></html>
